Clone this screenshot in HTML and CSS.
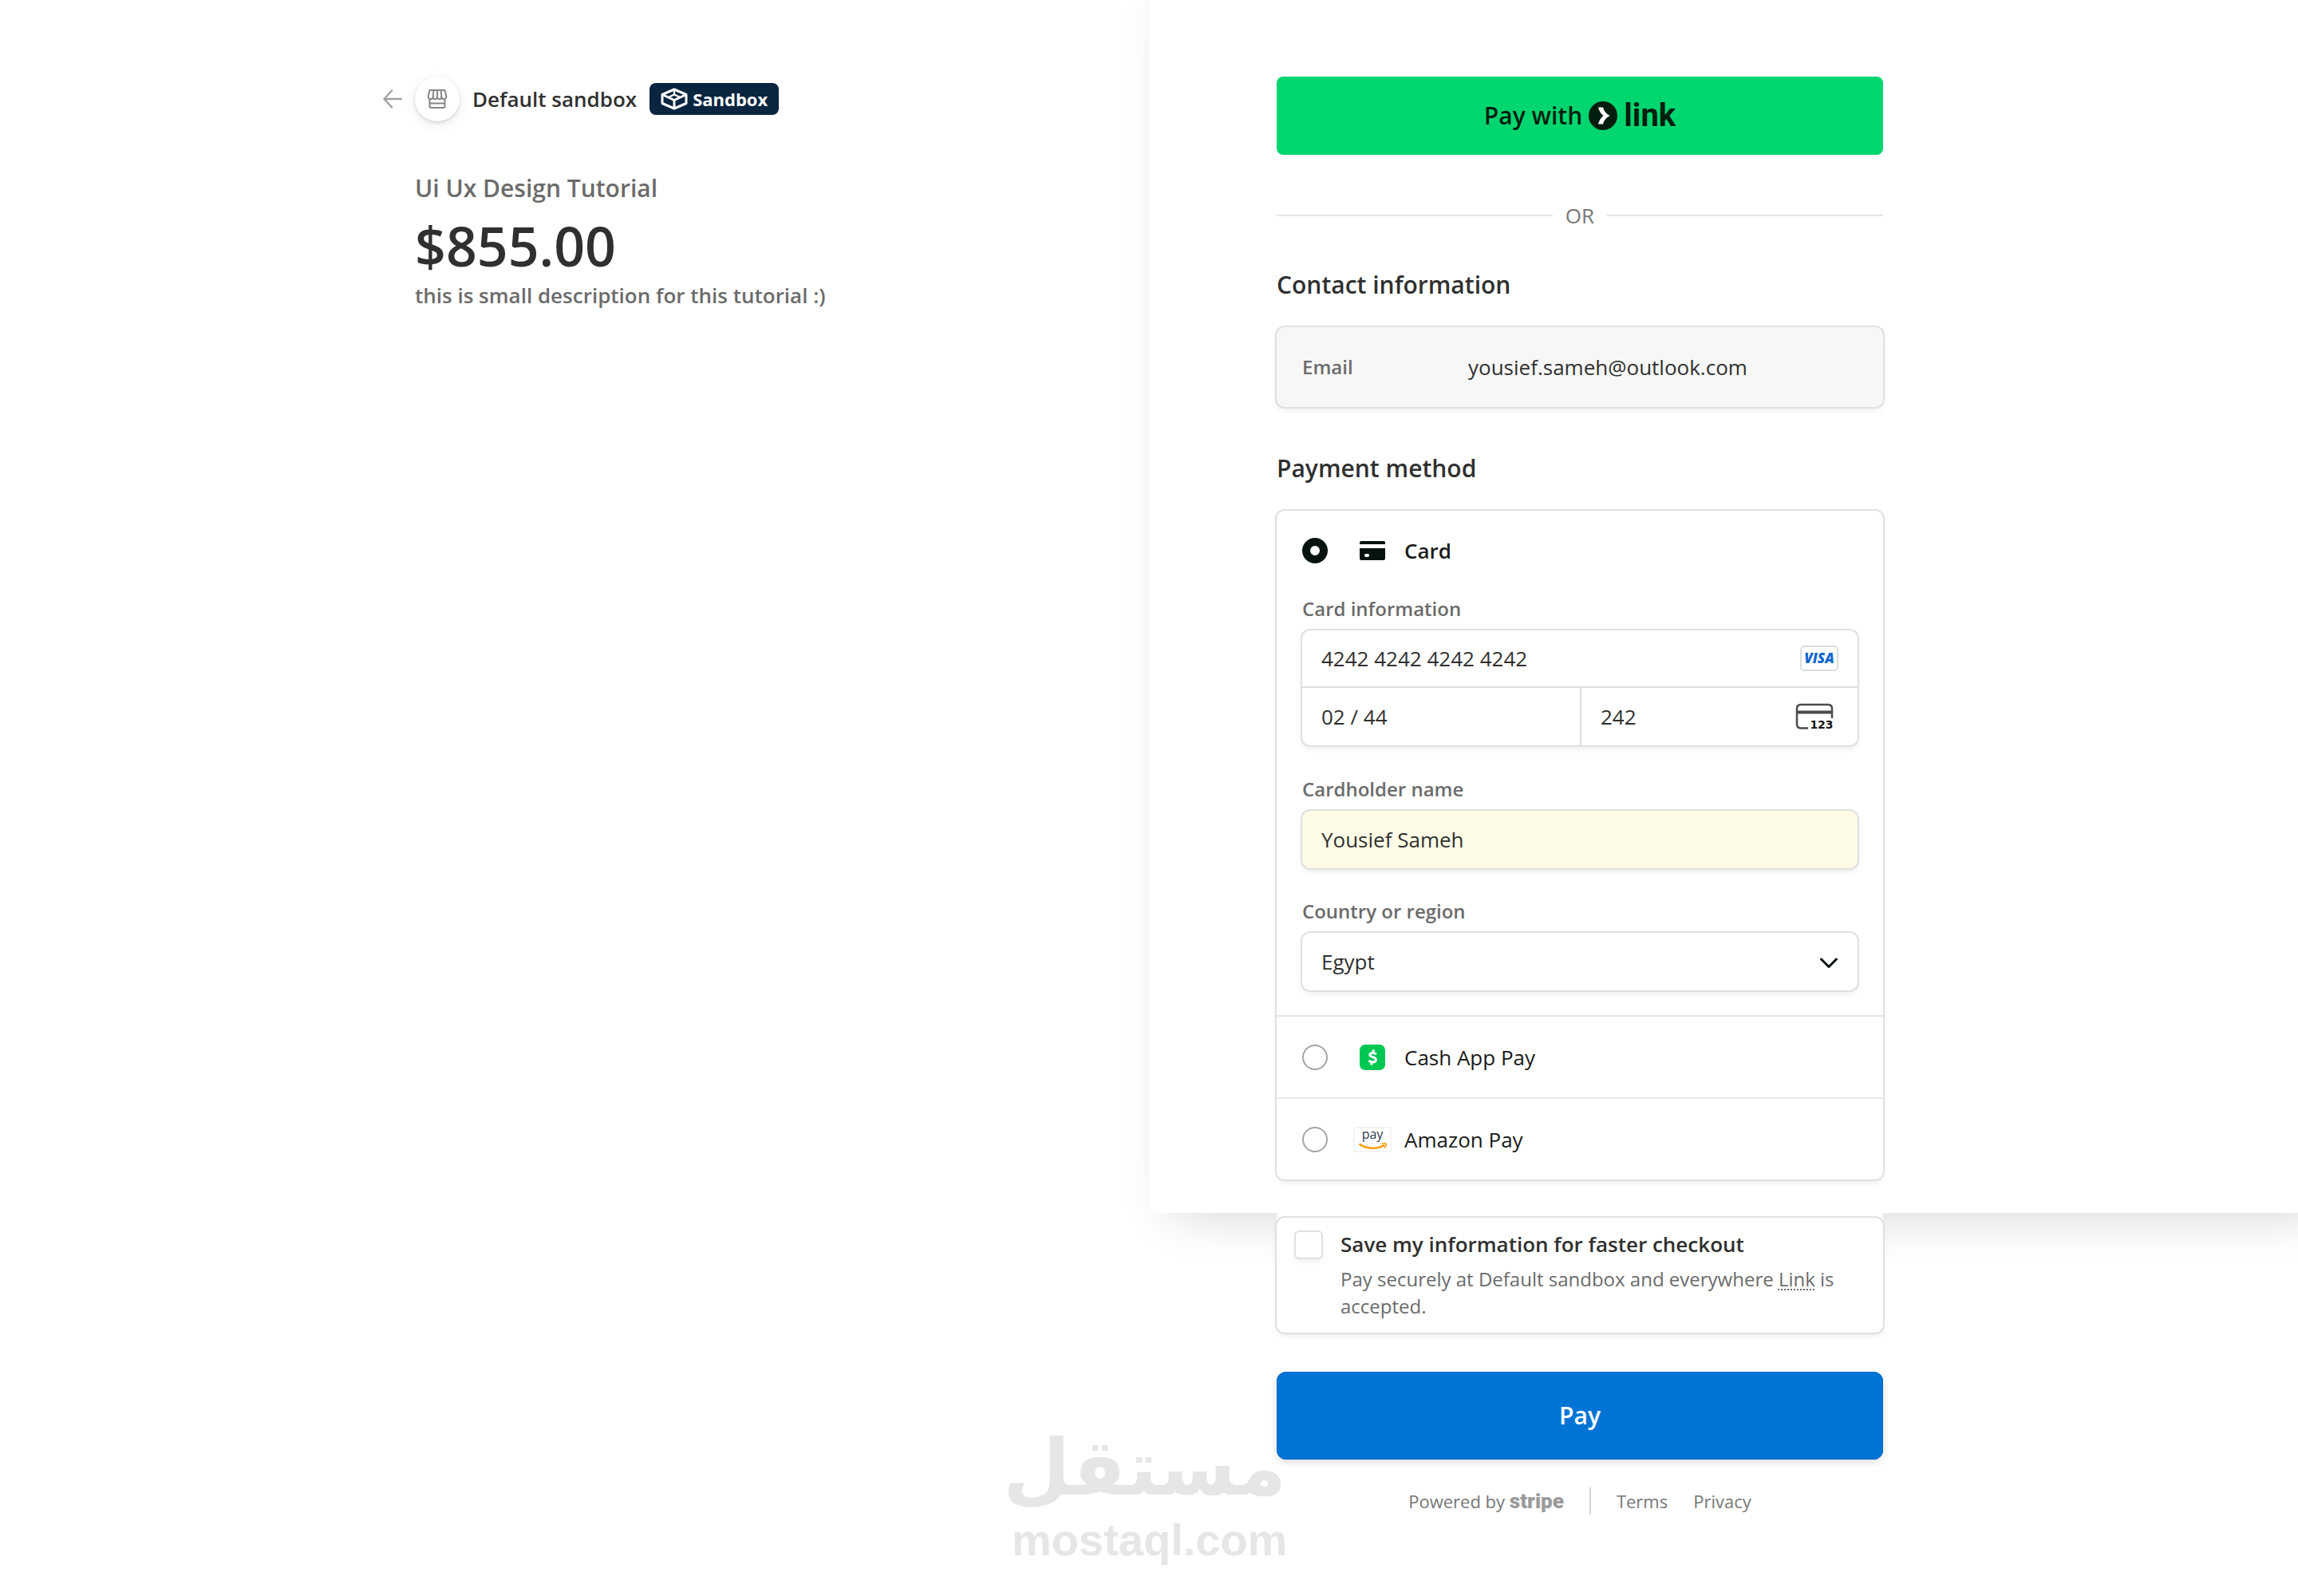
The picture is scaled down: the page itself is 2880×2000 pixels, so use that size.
FILE: index.html
```html
<!doctype html>
<html lang="en">
<head>
    <meta charset="UTF-8">
    <meta name="viewport" content="width=device-width, initial-scale=1.0">
    <title>Default sandbox</title>
    <link rel="stylesheet" href="styles.css">
</head>
<body>
    <div class="pane"></div>
    <div class="container">
        <div class="overview">
            <header class="header">
                <a href="#" class="back" aria-label="Back">
                    <svg width="24" height="24" viewBox="0 0 24 24" fill="none" stroke="#a0a2a2" stroke-width="2.4" stroke-linecap="round" stroke-linejoin="round">
                        <path d="M23 12H1.500M11 1.500L1.500 12L11 22.500"/>
                    </svg>
                </a>
                <div class="shop">
                    <svg width="26" height="26" viewBox="0 0 26 26" fill="none" stroke="#858787" stroke-width="2">
                        <path d="M3.500 2h19l1.800 7.500c0 5-6 5-6 0c0 5-5.300 5-5.300 0c0 5-5.300 5-5.300 0c0 5-6 5-6 0z" stroke-linejoin="round"/>
                        <path d="M8.500 2L7.700 9.500M17.500 2l.8 7.500M13 2v7.500"/>
                        <path d="M3.500 13.500v8.500q0 2 2 2h15q2 0 2-2v-8.500M3.500 18.500h19"/>
                    </svg>
                </div>
                <span class="shop-name">Default sandbox</span>
                <span class="badge">
                    <svg width="34" height="28" viewBox="0 0 34 28" fill="none" stroke="#ffffff" stroke-width="3" stroke-linejoin="round">
                        <path d="M17 2L32 8.500V19.500L17 26L2 19.500V8.500z"/>
                        <path d="M2 8.500L17 15.500L32 8.500M17 15.500V26"/>
                        <path d="M17 2v6M9.500 12L17 8.500L24.500 12" stroke-width="2.400"/>
                    </svg>
                    Sandbox
                </span>
            </header>
            <h1 class="product">Ui Ux Design Tutorial</h1>
            <div class="price">$855.00</div>
            <div class="description">this is small description for this tutorial :)</div>
        </div>

        <form class="payment">
            <button type="button" class="link-button">
                <span>Pay with</span>
                <svg width="36" height="36" viewBox="0 0 36 36">
                    <circle cx="18" cy="18" r="18" fill="#011e0f"/>
                    <path d="M12 7.500h6c1 4.500 4 8.300 8.500 10.500c-4.500 2.200-7.500 6-8.500 10.500H12c1-4.300 3.300-8 6.500-10.500C15.300 15.500 13 11.800 12 7.500z" fill="#ffffff"/>
                </svg>
                <span class="link-word">link</span>
            </button>
            <div class="or">OR</div>

            <h2>Contact information</h2>
            <div class="box contact">
                <span class="contact-label">Email</span>
                <span class="contact-value">yousief.sameh@outlook.com</span>
            </div>

            <h2 class="method-title">Payment method</h2>
            <div class="box methods">
                <div class="method open">
                    <input type="radio" name="method" id="card" checked>
                    <svg class="method-icon" width="48" height="32" viewBox="0 0 48 32">
                        <path d="M8 8V6q0-2 2-2h28q2 0 2 2v2zM8 13h32v13q0 2-2 2H10q-2 0-2-2z" fill="#06130f"/>
                        <rect x="14" y="20" width="6" height="4" rx="2" fill="#ffffff"/>
                    </svg>
                    <label for="card">Card</label>
                </div>
                <div class="fields">
                    <label class="field-label" for="number">Card information</label>
                    <div class="card-group">
                        <div class="cell number">
                            <input type="text" id="number" value="4242 4242 4242 4242">
                            <svg width="48" height="32" viewBox="0 0 48 32">
                                <rect x="1" y="1" width="46" height="30" rx="4" fill="#ffffff" stroke="#ccd6d3" stroke-width="1.500"/>
                                <text x="24" y="22" text-anchor="middle" class="visa">VISA</text>
                            </svg>
                        </div>
                        <div class="cell">
                            <input type="text" aria-label="Expiration" value="02 / 44">
                        </div>
                        <div class="cell cvc">
                            <input type="text" aria-label="CVC" value="242">
                            <svg width="48" height="36" viewBox="0 0 48 36">
                                <path d="M16 32.500H7q-5 0-5-5V8q0-5 5-5h34q5 0 5 5v12" fill="none" stroke="#4a4c4c" stroke-width="2.500"/>
                                <path d="M2 10.500h44v4H2z" fill="#4a4c4c"/>
                                <text x="33" y="33" text-anchor="middle" class="digits">123</text>
                            </svg>
                        </div>
                    </div>
                    <label class="field-label" for="name">Cardholder name</label>
                    <input type="text" id="name" class="field filled" value="Yousief Sameh">
                    <label class="field-label" for="country">Country or region</label>
                    <div class="select">
                        <select id="country" class="field">
                            <option>Egypt</option>
                        </select>
                        <svg width="24" height="16" viewBox="0 0 24 16" fill="none" stroke="#06130f" stroke-width="3" stroke-linecap="round" stroke-linejoin="round">
                            <path d="M2.500 3L12 12.500L21.500 3"/>
                        </svg>
                    </div>
                </div>
                <div class="method">
                    <input type="radio" name="method" id="cashapp">
                    <svg class="method-icon" width="48" height="32" viewBox="0 0 48 32">
                        <rect x="8" width="32" height="32" rx="7" fill="#00c853"/>
                        <path d="M28.800 12.300c-2.500-2.600-8.300-2.200-8 .8c.3 3.200 7.600 2 7.600 5.800c0 3.600-6.300 4-8.900 1.100M25.600 6.500l-.7 3M23.200 22.200l-.7 3.300" fill="none" stroke="#ffffff" stroke-width="3"/>
                    </svg>
                    <label for="cashapp">Cash App Pay</label>
                </div>
                <div class="method">
                    <input type="radio" name="method" id="amazon">
                    <svg class="method-icon" width="48" height="32" viewBox="0 0 48 32">
                        <rect x="1" y="1" width="46" height="30" rx="2" fill="#ffffff" stroke="#f0f0f0" stroke-width="1.500"/>
                        <text x="24" y="15" text-anchor="middle" class="amazon">pay</text>
                        <path d="M7.500 21.500c9 6.800 22.500 6.800 31.500 1.500" fill="none" stroke="#ff9900" stroke-width="2.600"/>
                        <path d="M35.500 21.300c2.500-.7 4.500-.8 5.500-.2c.5 1.400-.2 3.500-1.800 5.400" fill="none" stroke="#ff9900" stroke-width="1.600"/>
                    </svg>
                    <label for="amazon">Amazon Pay</label>
                </div>
            </div>

            <div class="box save">
                <input type="checkbox" id="save">
                <div>
                    <label class="save-title" for="save">Save my information for faster checkout</label>
                    <p>Pay securely at Default sandbox and everywhere <a href="#">Link</a> is accepted.</p>
                </div>
            </div>

            <button type="button" class="pay">Pay</button>
            <footer class="footer">
                <span>Powered by <b>stripe</b></span>
                <span class="rule"></span>
                <a href="#">Terms</a>
                <a href="#">Privacy</a>
            </footer>
        </form>
    </div>

    <div class="watermark">
        <div class="watermark-arabic" lang="ar" dir="rtl">مستقل</div>
        <div class="watermark-latin">mostaql.com</div>
    </div>
</body>
</html>
```
FILE: styles.css
```css
* {
    box-sizing: border-box;
}
body {
    margin: 0;
    position: relative;
    min-height: 100vh;
    background-color: #ffffff;
    color: #303030;
    font-family: "Open Sans", "Noto Sans", sans-serif;
    font-size: 26px;
    line-height: 36px;
}
input, select, button {
    font: inherit;
    color: inherit;
    margin: 0;
}
svg {
    display: block;
    flex: none;
}
a {
    color: inherit;
    text-decoration: none;
}

/* raised right half of the page */
.pane {
    position: absolute;
    top: 0;
    right: 0;
    width: 50%;
    height: 76vh;
    background-color: #ffffff;
    box-shadow: 30px 0 60px rgba(0, 0, 0, 0.18);
}

.container {
    position: relative;
    display: grid;
    grid-template-columns: minmax(0, 1fr) minmax(0, 1fr);
    gap: 320px;
    max-width: 1840px;
    margin: 0 auto;
    padding-top: 96px;
}

.header {
    display: flex;
    align-items: center;
    gap: 16px;
    margin-left: -40px;
    margin-bottom: 64px;
}
.shop {
    display: flex;
    align-items: center;
    justify-content: center;
    width: 56px;
    height: 56px;
    border-radius: 50%;
    background-color: #ffffff;
    box-shadow: 0 2px 4px rgba(0, 0, 0, 0.12), 0 4px 16px rgba(0, 0, 0, 0.08);
}
.shop-name {
    font-weight: 600;
}
.badge {
    display: flex;
    align-items: center;
    gap: 6px;
    height: 40px;
    padding: 0 14px;
    border-radius: 8px;
    background-color: #0a2540;
    color: #ffffff;
    font-size: 22px;
    font-weight: 700;
}

.product {
    margin: 0 0 12px;
    color: #6b6b6b;
    font-size: 30px;
    font-weight: 600;
    line-height: 40px;
}
.price {
    margin-bottom: 4px;
    font-size: 68px;
    font-weight: 600;
    line-height: 80px;
}
.description {
    color: #6b6b6b;
    font-weight: 600;
}

.payment {
    background-color: #ffffff;
}
.link-button {
    display: flex;
    align-items: center;
    justify-content: center;
    gap: 8px;
    width: 100%;
    height: 98px;
    border: none;
    border-radius: 8px;
    background-color: #00d66f;
    color: #011e0f;
    font-size: 30px;
    font-weight: 600;
}
.link-word {
    font-family: Roboto, sans-serif;
    font-size: 40px;
    font-weight: 700;
}
.or {
    display: flex;
    align-items: center;
    gap: 16px;
    margin: 58px 0 49px;
    color: #777777;
}
.or::before, .or::after {
    content: "";
    flex: 1;
    height: 2px;
    background-color: #e6e6e6;
}

h2 {
    margin: 0 0 33px;
    font-size: 30px;
    font-weight: 600;
    line-height: 40px;
}
.method-title {
    margin-top: 57px;
}
.box, .card-group, .field {
    border-radius: 10px;
    background-color: #ffffff;
    box-shadow: 0 0 0 2px #e0e0e0, 0 4px 8px rgba(0, 0, 0, 0.08);
}
.contact {
    display: flex;
    align-items: center;
    height: 100px;
    padding: 0 32px;
    background-color: #f7f7f7;
}
.contact-label {
    width: 208px;
    color: #6b6b6b;
    font-size: 24px;
    font-weight: 600;
}

.method {
    display: flex;
    align-items: center;
    height: 103px;
    padding: 0 32px;
    border-top: 2px solid #e6e6e6;
    color: #1a1a1a;
}
.method.open {
    height: 100px;
    border: none;
    font-weight: 600;
}
.method-icon {
    margin: 0 16px 0 32px;
}
input[type="radio"] {
    appearance: none;
    width: 32px;
    height: 32px;
    border: 2px solid #a3a5a5;
    border-radius: 50%;
}
input[type="radio"]:checked {
    border: 10px solid #06130f;
}
.fields {
    padding: 7px 32px 31px;
}
.field-label {
    display: block;
    margin-bottom: 11px;
    color: #6b6b6b;
    font-size: 24px;
    font-weight: 600;
    line-height: 32px;
}
.card-group {
    display: grid;
    grid-template-columns: 1fr 1fr;
    margin-bottom: 39px;
}
.cell {
    display: flex;
    align-items: center;
    min-width: 0;
    height: 72px;
    padding: 0 24px;
}
.cell input {
    flex: 1;
    min-width: 0;
    padding: 0;
    border: none;
    background: none;
}
.number {
    grid-column: 1 / 3;
    border-bottom: 2px solid #e0e0e0;
}
.cvc {
    padding-right: 30px;
    border-left: 2px solid #e0e0e0;
}
.field {
    display: block;
    width: 100%;
    height: 72px;
    padding: 0 24px;
    border: none;
}
.filled {
    margin-bottom: 38px;
    background-color: #fefbe6;
}
.select {
    position: relative;
}
.select select {
    appearance: none;
}
.select svg {
    position: absolute;
    top: 30px;
    right: 24px;
    pointer-events: none;
}

.visa {
    fill: #0a66d0;
    font: italic 800 17px "Open Sans", sans-serif;
}
.digits {
    fill: #111111;
    font: 700 14px "DejaVu Sans", sans-serif;
}
.amazon {
    fill: #303848;
    font: 500 16px "Open Sans", sans-serif;
}

.save {
    display: flex;
    gap: 24px;
    margin: 48px 0 49px;
    padding: 15px 24px 16px;
}
.save input {
    appearance: none;
    flex: none;
    width: 32px;
    height: 32px;
    margin-top: 3px;
    border-radius: 4px;
    box-shadow: 0 0 0 2px #e0e0e0, 0 4px 8px rgba(0, 0, 0, 0.08);
}
.save-title {
    font-weight: 600;
}
.save p {
    margin: 9px 0 0;
    color: #6b6b6b;
    font-size: 24px;
    line-height: 34px;
}
.save a {
    text-decoration: underline dotted 2px;
    text-underline-offset: 3px;
}

.pay {
    display: block;
    width: 100%;
    height: 110px;
    border: none;
    border-radius: 12px;
    background-color: #0074d4;
    color: #ffffff;
    font-size: 30px;
    font-weight: 600;
    box-shadow: inset 0 0 0 1px #0068c8, 0 4px 8px rgba(0, 0, 0, 0.12);
}
.footer {
    display: flex;
    justify-content: center;
    gap: 32px;
    margin-top: 35px;
    color: #777777;
    font-size: 22px;
    line-height: 34px;
}
.footer b {
    font-family: Roboto, sans-serif;
    font-size: 26px;
    font-weight: 900;
    color: #9a9a9a;
}
.rule {
    width: 2px;
    background-color: #d0d6d6;
}

.watermark {
    position: absolute;
    bottom: 38px;
    left: 50%;
    width: 344px;
    margin-left: -172px;
    color: #e6e6e6;
    font-weight: 700;
    text-align: center;
    white-space: nowrap;
}
.watermark-arabic {
    font-family: "DejaVu Sans", sans-serif;
    font-size: 97px;
    line-height: 116px;
}
.watermark-latin {
    font-family: "Liberation Sans", sans-serif;
    font-size: 56px;
    line-height: 64px;
}
```
